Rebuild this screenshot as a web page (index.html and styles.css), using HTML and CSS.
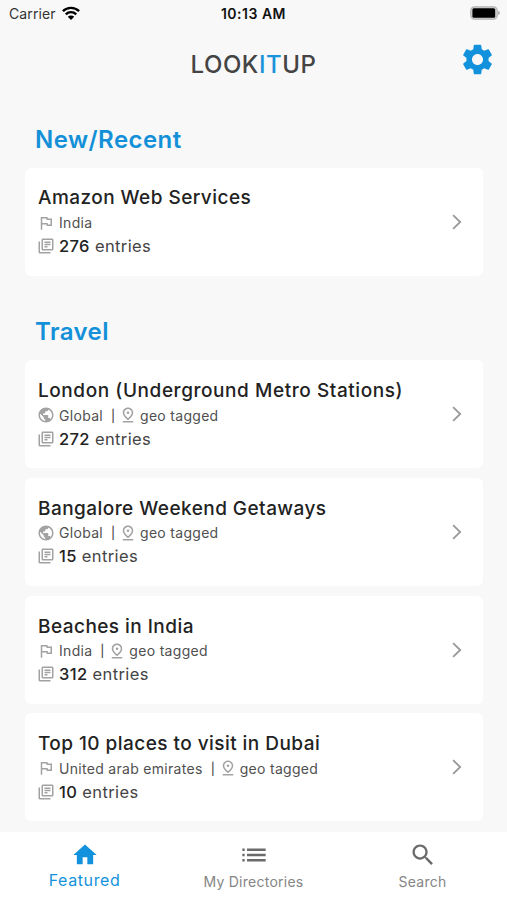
FILE: index.html
```
<!DOCTYPE html>
<html lang="en">
<head>
<meta charset="utf-8">
<title>LOOKITUP</title>
<link rel="stylesheet" href="styles.css">
</head>
<body>
<svg class="defs" width="0" height="0">
<symbol id="flag" viewBox="0 0 24 24"><path d="M12.36 6l.4 2H18v6h-3.36l-.4-2H7V6h5.36M14 4H5v17h2v-7h5.6l.4 2h7V6h-5.6L14 4z"/></symbol>
<symbol id="globe" viewBox="0 0 24 24"><path d="M12 2C6.480 2 2 6.480 2 12s4.480 10 10 10 10-4.480 10-10S17.520 2 12 2zm-1 17.930c-3.950-.490-7-3.850-7-7.930 0-.620.080-1.210.210-1.790L9 15v1c0 1.100.900 2 2 2v1.930zm6.900-2.540c-.260-.810-1-1.390-1.900-1.390h-1v-3c0-.550-.450-1-1-1H8v-2h2c.550 0 1-.450 1-1V7h2c1.100 0 2-.900 2-2v-.410c2.930 1.190 5 4.060 5 7.410 0 2.080-.800 3.970-2.100 5.390z"/></symbol>
<symbol id="pin" viewBox="0 0 24 24"><path d="M12 4c1.930 0 5 1.400 5 5.150 0 2.160-1.720 4.670-5 7.320-3.280-2.650-5-5.170-5-7.320C7 5.400 10.070 4 12 4m0-2C8.730 2 5 4.460 5 9.150c0 3.120 2.330 6.410 7 9.850 4.670-3.440 7-6.730 7-9.850C19 4.460 15.270 2 12 2z"/><circle cx="12" cy="9" r="1.7"/><path d="M5 20h14v2H5z"/></symbol>
<symbol id="library" viewBox="0 0 24 24"><path d="M4 6H2v14c0 1.100.900 2 2 2h14v-2H4V6zm16-4H8c-1.100 0-2 .900-2 2v12c0 1.100.900 2 2 2h12c1.100 0 2-.900 2-2V4c0-1.100-.900-2-2-2zm0 14H8V4h12v12zM10 9h8v2h-8zm0 3h4v2h-4zm0-6h8v2h-8z"/></symbol>
<symbol id="chevron" viewBox="0 0 10 16"><path d="M1.100 1.200L8.200 8l-7.100 6.800" fill="none" stroke="currentColor" stroke-width="1.800"/></symbol>
</svg>
<div class="screen">
  <header class="status">
    <div class="carrier">Carrier
      <svg class="wifi" viewBox="0 0 18 14"><g fill="none" stroke="currentColor" stroke-width="2.400"><path d="M.900 5.200a11.600 11.600 0 0 1 16.200 0"/><path d="M3.800 8.300a7.400 7.400 0 0 1 10.400 0"/></g><path d="M9 14l-3.200-3.200a4.600 4.600 0 0 1 6.400 0z"/></svg>
    </div>
    <div class="time">10:13 AM</div>
    <svg class="battery" viewBox="0 0 30 14"><rect x=".800" y=".800" width="26.400" height="12.400" rx="3.600" fill="#d4d4d4" stroke="#b4b4b4" stroke-width="1.200"/><rect x="2.400" y="2.300" width="22.800" height="9.400" rx="1.500"/><path d="M28.300 4.800a2.400 2.400 0 0 1 0 4.400z" fill="#999"/></svg>
  </header>
  <div class="titlebar">
    <h1>LOOK<span>IT</span>UP</h1>
    <svg class="gear" viewBox="0 0 24 24"><path d="M19.140 12.940c.040-.300.060-.610.060-.940 0-.320-.020-.640-.070-.940l2.030-1.580c.180-.140.230-.410.120-.610l-1.920-3.320c-.120-.220-.370-.290-.590-.220l-2.390.960c-.500-.380-1.030-.700-1.620-.940l-.360-2.540c-.040-.240-.240-.410-.480-.410h-3.840c-.240 0-.430.170-.470.410l-.360 2.540c-.590.240-1.130.570-1.620.940l-2.390-.960c-.220-.080-.470 0-.590.220L2.740 8.870c-.120.210-.080.470.120.610l2.030 1.580c-.050.300-.090.630-.090.940s.020.640.070.940l-2.030 1.580c-.180.140-.230.410-.120.610l1.920 3.320c.120.220.370.290.590.220l2.390-.960c.500.380 1.030.700 1.620.940l.360 2.540c.050.240.240.410.480.410h3.840c.240 0 .440-.170.470-.410l.360-2.540c.590-.240 1.130-.560 1.620-.940l2.390.960c.220.080.470 0 .590-.220l1.920-3.320c.120-.220.070-.470-.120-.610l-2.010-1.580zM12 15.600c-1.980 0-3.600-1.620-3.600-3.600s1.620-3.600 3.600-3.600 3.600 1.620 3.600 3.600-1.620 3.600-3.600 3.600z"/></svg>
  </div>
  <main>
    <section>
      <h2>New/Recent</h2>
      <article class="card"><div class="info">
        <h3>Amazon Web Services</h3>
        <div class="meta"><svg><use href="#flag"/></svg><span>India</span></div>
        <div class="entries"><svg><use href="#library"/></svg><span><b>276</b> entries</span></div>
      </div><svg class="chevron"><use href="#chevron"/></svg></article>
    </section>
    <section class="travel">
      <h2>Travel</h2>
      <article class="card"><div class="info">
        <h3 class="long">London (Underground Metro Stations)</h3>
        <div class="meta"><svg><use href="#globe"/></svg><span>Global</span><i>|</i><svg><use href="#pin"/></svg><span>geo tagged</span></div>
        <div class="entries"><svg><use href="#library"/></svg><span><b>272</b> entries</span></div>
      </div><svg class="chevron"><use href="#chevron"/></svg></article>
      <article class="card"><div class="info">
        <h3>Bangalore Weekend Getaways</h3>
        <div class="meta"><svg><use href="#globe"/></svg><span>Global</span><i>|</i><svg><use href="#pin"/></svg><span>geo tagged</span></div>
        <div class="entries"><svg><use href="#library"/></svg><span><b>15</b> entries</span></div>
      </div><svg class="chevron"><use href="#chevron"/></svg></article>
      <article class="card"><div class="info">
        <h3>Beaches in India</h3>
        <div class="meta"><svg><use href="#flag"/></svg><span>India</span><i>|</i><svg><use href="#pin"/></svg><span>geo tagged</span></div>
        <div class="entries"><svg><use href="#library"/></svg><span><b>312</b> entries</span></div>
      </div><svg class="chevron"><use href="#chevron"/></svg></article>
      <article class="card"><div class="info">
        <h3>Top 10 places to visit in Dubai</h3>
        <div class="meta"><svg><use href="#flag"/></svg><span>United arab emirates</span><i>|</i><svg><use href="#pin"/></svg><span>geo tagged</span></div>
        <div class="entries"><svg><use href="#library"/></svg><span><b>10</b> entries</span></div>
      </div><svg class="chevron"><use href="#chevron"/></svg></article>
    </section>
  </main>
  <nav>
    <div class="tab active"><svg viewBox="0 0 24 24"><path d="M10 20v-6h4v6h5v-8h3L12 3 2 12h3v8z"/></svg><span>Featured</span></div>
    <div class="tab"><svg viewBox="0 0 24 24"><path d="M2 6.500h2v2H2zm0 4.500h2v2H2zm0 4.500h2v2H2zM6 6.500h16v2H6zm0 4.500h16v2H6zm0 4.500h16v2H6z"/></svg><span>My Directories</span></div>
    <div class="tab"><svg viewBox="0 0 24 24"><path d="M15.500 14h-.790l-.280-.270C15.410 12.590 16 11.110 16 9.500 16 5.910 13.090 3 9.500 3S3 5.910 3 9.500 5.910 16 9.500 16c1.610 0 3.090-.590 4.230-1.570l.270.280v.790l5 4.990L20.490 19l-4.990-5zm-6 0C7.010 14 5 11.990 5 9.500S7.010 5 9.500 5 14 7.010 14 9.500 11.990 14 9.500 14z"/></svg><span>Search</span></div>
  </nav>
</div>
</body>
</html>
```
FILE: styles.css
```
* { box-sizing: border-box; }
body { margin: 0; font-family: Inter, "Liberation Sans", sans-serif; color: #222; background: #f8f8f8; }
h1, h2, h3 { margin: 0; }
svg { display: block; fill: currentColor; flex: none; }
.defs { position: absolute; }
.screen { width: 507px; height: 900px; display: flex; flex-direction: column; overflow: hidden; }
.status { height: 28px; flex: none; display: grid; grid-template-columns: 1fr auto 1fr; align-items: center; padding: 0 7px 0 9px; font-size: 14px; line-height: 28px; color: #111; }
.carrier { display: flex; align-items: center; gap: 6px; color: #333; letter-spacing: .1px; }
.wifi { width: 18px; height: 14px; color: #000; margin-top: -2px; }
.time { font-weight: 600; letter-spacing: .5px; margin-right: 2px; }
.battery { width: 30px; height: 14px; justify-self: end; color: #000; margin-top: -2px; }
.titlebar { height: 72px; flex: none; display: grid; grid-template-columns: 1fr auto 1fr; align-items: center; padding: 1px 11px 0; }
h1 { grid-column: 2; font-size: 24px; font-weight: 500; line-height: 30px; color: #444; letter-spacing: .55px; }
h1 span { color: #1a93dc; }
.gear { width: 37px; height: 37px; color: #1292dc; justify-self: end; margin-top: -10px; }
main { flex: 1; min-height: 0; overflow: hidden; padding: 20px 24px 0 25px; }
h2 { height: 48px; padding: 5px 10px 0; font-size: 24px; line-height: 30px; font-weight: 600; color: #1490d8; letter-spacing: .45px; }
section + section { margin-top: 36px; }
.card { height: 108px; margin-bottom: 9.800px; padding: 17px 21px 0 13px; background: #fff; border-radius: 6px; display: flex; justify-content: space-between; }
h3 { font-size: 19px; line-height: 26px; font-weight: 500; letter-spacing: .45px; color: #222; white-space: nowrap; }
.travel h3 { padding-top: 1px; margin-bottom: -1px; }
h3.long { letter-spacing: .57px; }
.meta, .entries { display: flex; align-items: center; margin-left: -1px; }
.meta { height: 23px; font-size: 14px; letter-spacing: .3px; color: #505050; }
.travel .meta { height: 24px; }
.entries { height: 23px; font-size: 16.500px; letter-spacing: .38px; color: #444; }
.entries b { font-weight: 500; color: #222; }
.meta svg, .entries svg { width: 18px; height: 18px; color: #a2a2a2; margin-right: 4px; }
.meta i { width: 4px; margin: 0 4px 0 8px; font-style: normal; font-size: 12px; font-weight: 500; }
.meta i + svg { margin-right: 3px; }
.chevron { width: 10px; height: 16px; color: #999; margin-top: 29px; }
nav { height: 68px; flex: none; background: #fff; display: grid; grid-template-columns: repeat(3, 1fr); }
.tab { display: flex; flex-direction: column; align-items: center; padding-top: 9px; color: #6b6b6b; font-size: 14px; letter-spacing: .25px; }
.tab svg { width: 28px; height: 28px; }
.tab span { line-height: 20px; margin-top: 3px; color: #858585; }
.tab.active { color: #1292dc; font-size: 16px; letter-spacing: .6px; }
.tab.active span { color: #1292dc; margin-top: 1px; }
```
